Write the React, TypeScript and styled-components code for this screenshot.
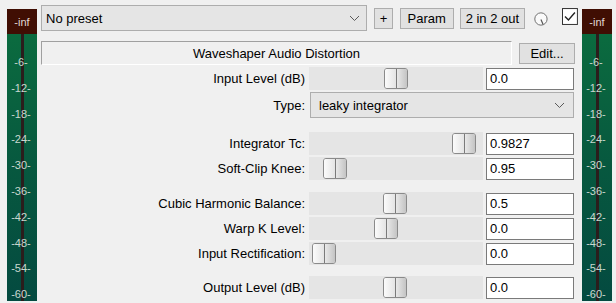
import React from 'react'
import styled, { createGlobalStyle } from 'styled-components'

const GlobalStyle = createGlobalStyle`
  html, body {
    margin: 0;
    padding: 0;
    background: #f0f0f0;
    font-family: 'Liberation Sans', Arial, sans-serif;
    font-size: 13px;
    color: #000;
  }
`

const MeterMarks = [-6, -12, -18, -24, -30, -36, -42, -48, -54, -60]

type Param = { label: string; value: string; pos: number; gap?: number }

const groups: Param[][] = [
  [{ label: 'Input Level (dB)', value: '0.0', pos: 0.5 }],
  [
    { label: 'Integrator Tc:', value: '0.9827', pos: 0.955, gap: 14 },
    { label: 'Soft-Clip Knee:', value: '0.95', pos: 0.095 }
  ],
  [
    { label: 'Cubic Harmonic Balance:', value: '0.5', pos: 0.49, gap: 12 },
    { label: 'Warp K Level:', value: '0.0', pos: 0.43 },
    { label: 'Input Rectification:', value: '0.0', pos: 0.02 }
  ],
  [{ label: 'Output Level (dB)', value: '0.0', pos: 0.49, gap: 11 }]
]

const Chevron = () => (
  <svg width='11' height='7' viewBox='0 0 11 7'>
    <path d='M1 1 L5.5 5.5 L10 1' fill='none' stroke='#5a5a5a' strokeWidth='1' />
  </svg>
)

const Meter = () => (
  <MeterWrap>
    <MeterHead>-inf</MeterHead>
    <MeterBody>
      <MeterLine />
      {MeterMarks.map((db, i) => (
        <MeterMark key={db} style={{ top: 28 + i * 25.8 }}>
          {db}-
        </MeterMark>
      ))}
    </MeterBody>
  </MeterWrap>
)

const ParamRow = ({ p }: { p: Param }) => (
  <Row $gap={p.gap ?? 2}>
    <Label>{p.label}</Label>
    <Track>
      <Thumb style={{ left: Math.round(p.pos * 150) }}>
        <span />
        <span />
      </Thumb>
    </Track>
    <ValueBox>{p.value}</ValueBox>
  </Row>
)

export default function App() {
  return (
    <Frame>
      <GlobalStyle />
      <Meter />
      <Main>
        <TopBar>
          <Preset>
            <span>No preset</span>
            <Chevron />
          </Preset>
          <ToolButton $w={19}>+</ToolButton>
          <ToolButton $w={54}>Param</ToolButton>
          <ToolButton $w={66} style={{ marginLeft: -1 }}>
            2 in 2 out
          </ToolButton>
          <Knob width='14' height='14' viewBox='0 0 14 14'>
            <circle cx='7' cy='7' r='6.2' fill='#fafafa' stroke='#707070' strokeWidth='1' />
            <line x1='7' y1='7.5' x2='9.2' y2='12.6' stroke='#555' strokeWidth='1.2' />
          </Knob>
          <Check width='16' height='17' viewBox='0 0 16 17'>
            <rect x='0.5' y='0.5' width='15' height='16' fill='#fff' stroke='#333' />
            <path d='M3 8.5 L6.5 12 L13 4.5' fill='none' stroke='#222' strokeWidth='1.4' />
          </Check>
        </TopBar>

        <TitleRow>
          <TitleBox>Waveshaper Audio Distortion</TitleBox>
          <EditButton>Edit...</EditButton>
        </TitleRow>

        <ParamRow p={groups[0][0]} />
        <Row $gap={2} $tall>
          <Label>Type:</Label>
          <Combo>
            <span>leaky integrator</span>
            <Chevron />
          </Combo>
        </Row>
        {groups.slice(1).map((g, gi) => (
          <React.Fragment key={gi}>
            {g.map(p => (
              <ParamRow key={p.label} p={p} />
            ))}
          </React.Fragment>
        ))}
      </Main>
      <Meter />
    </Frame>
  )
}

const Frame = styled.div`
  display: flex;
  align-items: flex-start;
  gap: 4px;
  padding: 5px 4px 0 7px;
  height: 303px;
  box-sizing: border-box;
  overflow: hidden;
`

const MeterWrap = styled.div`
  flex: 0 0 30px;
  margin-top: 4px;
  height: 292px;
  display: flex;
  flex-direction: column;
`

const MeterHead = styled.div`
  height: 25px;
  background: #400e03;
  color: #e0d8d4;
  font-size: 11px;
  display: flex;
  align-items: center;
  justify-content: center;
`

const MeterBody = styled.div`
  position: relative;
  flex: auto;
  background: linear-gradient(to bottom, #0b6b3f 0%, #07583f 50%, #044a40 100%);
`

const MeterLine = styled.div`
  position: absolute;
  left: 14px;
  top: 0;
  bottom: 0;
  width: 3px;
  background: #2b1d1c;
`

const MeterMark = styled.div`
  position: absolute;
  left: -4px;
  right: -2px;
  transform: translateY(-50%);
  text-align: center;
  font-size: 11px;
  line-height: 12px;
  color: #c9d8d0;
`

const Main = styled.div`
  width: 537px;
  display: flex;
  flex-direction: column;
`

const TopBar = styled.div`
  display: flex;
  align-items: center;
  gap: 7px;
  height: 26px;
`

const Preset = styled.div`
  width: 328px;
  height: 26px;
  box-sizing: border-box;
  border: 1px solid #adadad;
  background: #e5e5e5;
  display: flex;
  align-items: center;
  justify-content: space-between;
  padding: 0 6px 0 4px;
`

const ToolButton = styled.div<{ $w: number }>`
  width: ${p => p.$w}px;
  height: 21px;
  box-sizing: border-box;
  border: 1px solid #adadad;
  background: #e1e1e1;
  display: flex;
  align-items: center;
  justify-content: center;
`

const Knob = styled.svg`
  margin-left: 2px;
  margin-top: 2px;
`

const Check = styled.svg`
  margin-left: 7px;
  margin-top: -3px;
`

const TitleRow = styled.div`
  display: flex;
  align-items: center;
  gap: 7px;
  margin-top: 10px;
  height: 24px;
`

const TitleBox = styled.div`
  width: 471px;
  height: 24px;
  box-sizing: border-box;
  border-top: 1px solid #a0a0a0;
  border-left: 1px solid #a0a0a0;
  border-right: 1px solid #fff;
  border-bottom: 1px solid #fff;
  display: flex;
  align-items: center;
  justify-content: center;
`

const EditButton = styled.div`
  width: 56px;
  height: 21px;
  box-sizing: border-box;
  border: 1px solid #adadad;
  background: #e1e1e1;
  display: flex;
  align-items: center;
  justify-content: center;
`

const Row = styled.div<{ $gap: number; $tall?: boolean }>`
  display: grid;
  grid-template-columns: 264px 174px 87px;
  column-gap: 4px;
  align-items: center;
  height: ${p => (p.$tall ? 26 : 23)}px;
  margin-top: ${p => p.$gap}px;
  &:first-of-type {
    margin-top: 3px;
  }
`

const Label = styled.div`
  text-align: right;
  white-space: nowrap;
`

const Track = styled.div`
  position: relative;
  height: 23px;
  background: #e5e5e5;
`

const Thumb = styled.div`
  position: absolute;
  top: 1px;
  width: 24px;
  height: 21px;
  box-sizing: border-box;
  border: 1px solid #8a8a8a;
  border-radius: 3px;
  display: flex;
  overflow: hidden;
  span {
    flex: 1;
  }
  span:first-child {
    background: linear-gradient(to right, #fbfbfb, #e4e4e4);
    border-right: 1px solid #7a7a7a;
  }
  span:last-child {
    background: linear-gradient(to right, #e8e8e8, #c4c4c4);
  }
`

const ValueBox = styled.div`
  margin-left: -1px;
  height: 22px;
  box-sizing: border-box;
  border: 1px solid #7a7a7a;
  background: #fff;
  padding: 0 3px;
  display: flex;
  align-items: center;
`

const Combo = styled.div`
  grid-column: 2 / span 2;
  margin-left: 1px;
  height: 26px;
  box-sizing: border-box;
  border: 1px solid #adadad;
  background: #e5e5e5;
  display: flex;
  align-items: center;
  justify-content: space-between;
  padding: 0 8px 0 8px;
`
